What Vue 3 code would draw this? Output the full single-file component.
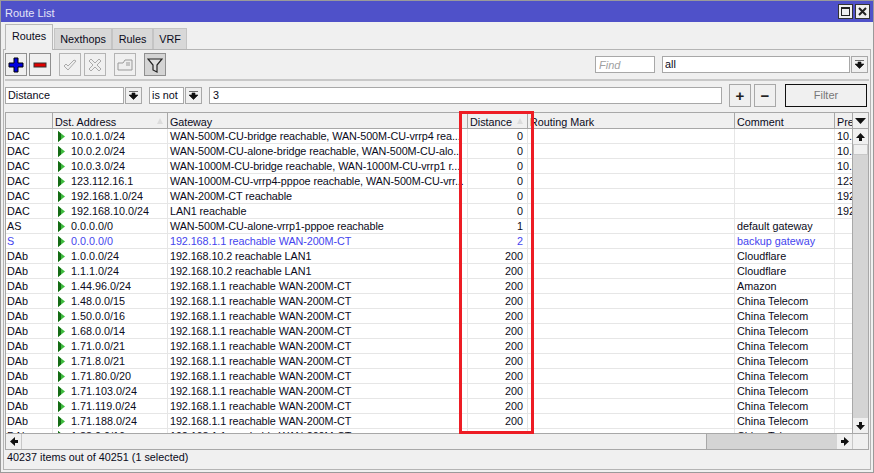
<script setup>
const gw1 = '192.168.1.1 reachable WAN-200M-CT'
const gw2 = '192.168.10.2 reachable LAN1'
const routes = [
  { flag: 'DAC', dst: '10.0.1.0/24', gw: 'WAN-500M-CU-bridge reachable, WAN-500M-CU-vrrp4 rea...', dist: 0, pref: '10.0.1.1' },
  { flag: 'DAC', dst: '10.0.2.0/24', gw: 'WAN-500M-CU-alone-bridge reachable, WAN-500M-CU-alo...', dist: 0, pref: '10.0.2.1' },
  { flag: 'DAC', dst: '10.0.3.0/24', gw: 'WAN-1000M-CU-bridge reachable, WAN-1000M-CU-vrrp1 r...', dist: 0, pref: '10.0.3.1' },
  { flag: 'DAC', dst: '123.112.16.1', gw: 'WAN-1000M-CU-vrrp4-pppoe reachable, WAN-500M-CU-vrr...', dist: 0, pref: '123.112' },
  { flag: 'DAC', dst: '192.168.1.0/24', gw: 'WAN-200M-CT reachable', dist: 0, pref: '192.168' },
  { flag: 'DAC', dst: '192.168.10.0/24', gw: 'LAN1 reachable', dist: 0, pref: '192.168' },
  { flag: 'AS', dst: '0.0.0.0/0', gw: 'WAN-500M-CU-alone-vrrp1-pppoe reachable', dist: 1, comment: 'default gateway' },
  { flag: 'S', dst: '0.0.0.0/0', gw: gw1, dist: 2, comment: 'backup gateway', blue: true },
  { flag: 'DAb', dst: '1.0.0.0/24', gw: gw2, dist: 200, comment: 'Cloudflare' },
  { flag: 'DAb', dst: '1.1.1.0/24', gw: gw2, dist: 200, comment: 'Cloudflare' },
  { flag: 'DAb', dst: '1.44.96.0/24', gw: gw1, dist: 200, comment: 'Amazon' },
  { flag: 'DAb', dst: '1.48.0.0/15', gw: gw1, dist: 200, comment: 'China Telecom' },
  { flag: 'DAb', dst: '1.50.0.0/16', gw: gw1, dist: 200, comment: 'China Telecom' },
  { flag: 'DAb', dst: '1.68.0.0/14', gw: gw1, dist: 200, comment: 'China Telecom' },
  { flag: 'DAb', dst: '1.71.0.0/21', gw: gw1, dist: 200, comment: 'China Telecom' },
  { flag: 'DAb', dst: '1.71.8.0/21', gw: gw1, dist: 200, comment: 'China Telecom' },
  { flag: 'DAb', dst: '1.71.80.0/20', gw: gw1, dist: 200, comment: 'China Telecom' },
  { flag: 'DAb', dst: '1.71.103.0/24', gw: gw1, dist: 200, comment: 'China Telecom' },
  { flag: 'DAb', dst: '1.71.119.0/24', gw: gw1, dist: 200, comment: 'China Telecom' },
  { flag: 'DAb', dst: '1.71.188.0/24', gw: gw1, dist: 200, comment: 'China Telecom' },
  { flag: 'DAb', dst: '1.88.0.0/16', gw: gw1, dist: 200, comment: 'China Telecom' }
]
</script>

<template>
  <div class="window">
    <div class="titlebar">
      <span class="title">Route List</span>
      <div class="winbtns">
        <span class="winbtn"><i class="maxbox"></i></span>
        <span class="winbtn">
          <svg width="11" height="11" viewBox="0 0 11 11"><path d="M2 2 L9 9 M9 2 L2 9" stroke="#222" stroke-width="2" /></svg>
        </span>
      </div>
    </div>

    <div class="tabs">
      <span class="tab active t-routes">Routes</span>
      <span class="tab t-next">Nexthops</span>
      <span class="tab t-rules">Rules</span>
      <span class="tab t-vrf">VRF</span>
    </div>

    <div class="panel">
      <div class="toolbar">
        <button class="tool">
          <svg width="16" height="16" viewBox="0 0 16 16"><path d="M6 1h4v5h5v4h-5v5H6v-5H1V6h5z" fill="#0000e0" stroke="#000" stroke-width="1" /></svg>
        </button>
        <button class="tool near">
          <svg width="16" height="16" viewBox="0 0 16 16"><rect x="2" y="6" width="12" height="4" fill="#e00000" stroke="#333" stroke-width="1" /></svg>
        </button>
        <button class="tool off gap">
          <svg width="16" height="16" viewBox="0 0 16 16"><path d="M2 9l4 4 8-9-2-1-6 6-2-2z" fill="#eee" stroke="#aaa" /></svg>
        </button>
        <button class="tool off near3">
          <svg width="16" height="16" viewBox="0 0 16 16"><path d="M4 2l4 4 4-4 2 2-4 4 4 4-2 2-4-4-4 4-2-2 4-4-4-4z" fill="#eee" stroke="#aaa" /></svg>
        </button>
        <button class="tool off gap">
          <svg width="16" height="16" viewBox="0 0 16 16"><path d="M1 6h5l2-3h7v10H1z" fill="#eee" stroke="#999" /><path d="M9 6h4M9 8h4" stroke="#999" /></svg>
        </button>
        <button class="tool pressed gap">
          <svg width="16" height="16" viewBox="0 0 16 16"><path d="M1 2h14L10 8v7L6 13V8z" fill="#ddd" stroke="#222" stroke-width="1.2" /></svg>
        </button>
        <input class="find" placeholder="Find" />
        <div class="all-box">all</div>
        <span class="dropbtn">
          <svg width="9" height="9" viewBox="0 0 9 9"><path d="M0 0.5h9M3 2h3v2h3L4.5 8.5 0 4h3z" stroke="#111" stroke-width="0.6" fill="#111" /></svg>
        </span>
      </div>

      <div class="filterrow">
        <div class="field f-distance">Distance</div>
        <span class="dropbtn">
          <svg width="9" height="9" viewBox="0 0 9 9"><path d="M0 0.5h9M3 2h3v2h3L4.5 8.5 0 4h3z" stroke="#111" stroke-width="0.6" fill="#111" /></svg>
        </span>
        <div class="field f-isnot">is not</div>
        <span class="dropbtn">
          <svg width="9" height="9" viewBox="0 0 9 9"><path d="M0 0.5h9M3 2h3v2h3L4.5 8.5 0 4h3z" stroke="#111" stroke-width="0.6" fill="#111" /></svg>
        </span>
        <div class="field f-value">3</div>
        <button class="mini">+</button>
        <button class="mini m2">−</button>
        <button class="filterbtn">Filter</button>
      </div>

      <div class="tablewrap">
        <div class="body-area">
          <div class="grid">
            <div class="row head">
              <div class="c c-flag"></div>
              <div class="c c-dst">Dst. Address<i class="sort"></i></div>
              <div class="c c-gw">Gateway</div>
              <div class="c c-dist">Distance<i class="sort"></i></div>
              <div class="c c-mark">Routing Mark</div>
              <div class="c c-comment">Comment</div>
              <div class="c c-pref">Pref</div>
            </div>
            <div class="rows">
              <div class="row" v-for="r in routes" :key="r.dst + r.flag" :class="{ blue: r.blue }">
                <div class="c c-flag">{{ r.flag }}</div>
                <div class="c c-dst">
                  <svg class="arrow" width="7" height="11" viewBox="0 0 7 11"><path d="M0 0L7 5.5L0 11z" fill="#3dbb3d" /><path d="M0 0L3 2.4V8.6L0 11z" fill="#146a14" /></svg>{{ r.dst }}
                </div>
                <div class="c c-gw">{{ r.gw }}</div>
                <div class="c c-dist num">{{ r.dist }}</div>
                <div class="c c-mark"></div>
                <div class="c c-comment">{{ r.comment }}</div>
                <div class="c c-pref">{{ r.pref }}</div>
              </div>
            </div>
          </div>
          <div class="vscroll">
            <span class="sbtn head-btn">
              <svg width="11" height="6" viewBox="0 0 11 6"><path d="M0 0h11L5.5 6z" fill="#111" /></svg>
            </span>
            <span class="sbtn">
              <svg width="9" height="8" viewBox="0 0 9 8"><path d="M4.5 0L9 5H6v3H3V5H0z" fill="#111" /></svg>
            </span>
            <span class="thumb-v"></span>
            <span class="track-v"></span>
            <span class="sbtn">
              <svg width="9" height="8" viewBox="0 0 9 8"><path d="M3 0h3v3h3L4.5 8 0 3h3z" fill="#111" /></svg>
            </span>
          </div>
        </div>
        <div class="hscroll">
          <span class="sbtn sleft">
            <svg width="8" height="9" viewBox="0 0 8 9"><path d="M0 4.5L5 0v3h3v3H5v3z" fill="#111" /></svg>
          </span>
          <span class="thumb-h"></span>
          <span class="track-h"></span>
          <span class="sbtn">
            <svg width="8" height="9" viewBox="0 0 8 9"><path d="M8 4.5L3 0v3H0v3h3v3z" fill="#111" /></svg>
          </span>
          <span class="corner"></span>
        </div>
        <div class="redbox"></div>
      </div>

      <div class="status">40237 items out of 40251 (1 selected)</div>
    </div>
  </div>
</template>

<style scoped>
.window {
  width: 874px;
  height: 473px;
  box-sizing: border-box;
  background: #f0f0f0;
  border: 1px solid #9a9a9a;
  display: flex;
  flex-direction: column;
  font-family: "Liberation Sans", Arial, sans-serif;
  font-size: 10.8px;
  color: #0a0a20;
  overflow: hidden;
}
.titlebar {
  height: 21px;
  background: #4f51c9;
  display: flex;
  align-items: center;
  justify-content: space-between;
  padding: 0 3px 0 4px;
  flex: none;
}
.title {
  color: #e4e4f8;
  font-size: 11px;
  position: relative;
  top: 1px;
}
.winbtns {
  display: flex;
  gap: 2px;
}
.winbtn {
  width: 15px;
  height: 15px;
  box-sizing: border-box;
  background: #efefef;
  border: 1px solid #333;
  display: flex;
  align-items: center;
  justify-content: center;
}
.maxbox {
  width: 9px;
  height: 9px;
  border: 1px solid #222;
  border-top-width: 2px;
  box-sizing: border-box;
  display: block;
}
.tabs {
  display: flex;
  height: 28px;
  box-sizing: border-box;
  padding-left: 4px;
  flex: none;
  align-items: flex-end;
  position: relative;
  z-index: 1;
  margin-bottom: -1px;
}
.tab {
  height: 21px;
  line-height: 21px;
  text-align: center;
  background: #d8d8d8;
  border: 1px solid #c4c4c4;
  border-bottom: 0;
  box-sizing: border-box;
  margin-bottom: 1px;
}
.tab.active {
  height: 26px;
  line-height: 23px;
  background: #f0f0f0;
  border-color: #b8b8b8;
  margin-bottom: 0;
  margin-right: 1px;
}
.t-routes { width: 48px; }
.t-next { width: 58px; }
.t-rules { width: 41px; }
.t-vrf { width: 34px; }
.panel {
  flex: 1;
  margin: 0 2px 2px 2px;
  padding: 0 1px;
  border: 1px solid #b4b4b4;
  display: flex;
  flex-direction: column;
  min-height: 0;
}
.toolbar {
  height: 31px;
  display: flex;
  align-items: center;
  border-bottom: 2px solid #c8c8c8;
  box-sizing: border-box;
  flex: none;
}
.tool {
  width: 22px;
  height: 23px;
  padding: 0;
  background: #f0f0f0;
  border: 1px solid #8f8f8f;
  display: flex;
  align-items: center;
  justify-content: center;
}
.tool.off {
  border-color: #b4b4b4;
}
.tool.near {
  margin-left: 2px;
}
.tool.near3 {
  margin-left: 3px;
}
.tool.gap {
  margin-left: 8px;
}
.tool.pressed {
  background: #d4d4d4;
}
.find {
  width: 60px;
  height: 17px;
  box-sizing: border-box;
  margin-left: auto;
  padding: 0 3px;
  border: 1px solid #a8a8a8;
  background: #fff;
  font: italic 11px "Liberation Sans", Arial, sans-serif;
  outline: none;
}
.find::placeholder {
  color: #a0a0a0;
}
.all-box {
  width: 188px;
  height: 17px;
  box-sizing: border-box;
  line-height: 15px;
  padding-left: 2px;
  border: 1px solid #a8a8a8;
  background: #fff;
  margin-left: 7px;
  margin-right: 1px;
}
.toolbar .dropbtn {
  margin-right: 1px;
}
.dropbtn {
  width: 17px;
  height: 17px;
  border: 1px solid #a8a8a8;
  background: #f0f0f0;
  display: inline-flex;
  align-items: center;
  justify-content: center;
  box-sizing: border-box;
  flex: none;
}
.filterrow {
  height: 31px;
  box-sizing: border-box;
  padding-bottom: 3px;
  display: flex;
  align-items: center;
  flex: none;
}
.field {
  height: 17px;
  line-height: 15px;
  padding-left: 2px;
  border: 1px solid #a8a8a8;
  background: #fff;
  box-sizing: border-box;
}
.f-distance {
  width: 119px;
  margin-right: 1px;
}
.f-isnot {
  width: 35px;
  margin-left: 7px;
  margin-right: 1px;
}
.f-value {
  width: 513px;
  margin-left: 7px;
  padding-left: 3px;
}
.mini {
  width: 22px;
  height: 23px;
  padding: 0;
  margin-left: 7px;
  border: 1px solid #a8a8a8;
  background: #f0f0f0;
  color: #222;
  font: bold 15px "Liberation Sans", Arial, sans-serif;
}
.mini.m2 {
  margin-left: 3px;
}
.filterbtn {
  width: 82px;
  height: 23px;
  margin-left: 9px;
  padding: 0;
  border: 1px solid #111;
  background: #f0f0f0;
  color: #777;
  font: 11px "Liberation Sans", Arial, sans-serif;
}
.tablewrap {
  position: relative;
  width: 864px;
  height: 338px;
  flex: none;
  border: 1px solid #a8a8a8;
  box-sizing: border-box;
}
.body-area {
  display: flex;
  height: 320px;
}
.grid {
  flex: 1;
  min-width: 0;
  overflow: hidden;
  background: #fff;
}
.rows {
  height: 304px;
  overflow: hidden;
}
.row {
  display: flex;
  height: 15px;
  line-height: 14px;
  box-sizing: border-box;
  border-bottom: 1px solid #e6e6e6;
  white-space: nowrap;
}
.row.blue {
  color: #4444ee;
}
.row.head {
  height: 16px;
  line-height: 18px;
  background: #f0f0f0;
  border-bottom: 1px solid #a8a8a8;
}
.c {
  box-sizing: border-box;
  padding-left: 2px;
  border-right: 1px solid #e6e6e6;
  overflow: hidden;
  position: relative;
  flex: none;
}
.head .c {
  border-right-color: #a8a8a8;
}
.c-flag { width: 47px; padding-left: 1px; }
.c-dst { width: 115px; }
.c-gw { width: 300px; letter-spacing: -0.08px; }
.c-dist { width: 60px; }
.c-mark { width: 207px; }
.c-comment { width: 100px; }
.c-pref { width: 18px; border-right: 0; }
.num {
  text-align: right;
  padding-right: 4px;
}
.arrow {
  margin: 0 6px 0 3px;
  vertical-align: -2px;
}
.sort {
  position: absolute;
  right: 4px;
  top: 5px;
  width: 0;
  height: 0;
  border-left: 3px solid transparent;
  border-right: 3px solid transparent;
  border-bottom: 6px solid #dcdcdc;
}
.vscroll {
  width: 16px;
  flex: none;
  display: flex;
  flex-direction: column;
  border-left: 1px solid #a8a8a8;
  box-sizing: border-box;
  background: #d4d4d4;
}
.sbtn {
  width: 15px;
  height: 15px;
  background: #f0f0f0;
  display: flex;
  align-items: center;
  justify-content: center;
  flex: none;
}
.head-btn {
  height: 16px;
  border-bottom: 1px solid #a8a8a8;
  box-sizing: border-box;
}
.thumb-v {
  height: 11px;
  background: #f0f0f0;
  border: 1px solid #c8c8c8;
  box-sizing: border-box;
  flex: none;
}
.track-v {
  flex: 1;
}
.hscroll {
  height: 16px;
  box-sizing: border-box;
  display: flex;
  border-top: 1px solid #a8a8a8;
  background: #d4d4d4;
}
.sleft {
  border-right: 1px solid #c8c8c8;
  box-sizing: content-box;
}
.thumb-h {
  width: 685px;
  background: #f0f0f0;
  border-right: 1px solid #a8a8a8;
  box-sizing: border-box;
  flex: none;
}
.track-h {
  flex: 1;
}
.corner {
  width: 16px;
  background: #f0f0f0;
  border-left: 1px solid #c8c8c8;
  box-sizing: border-box;
  flex: none;
}
.redbox {
  position: absolute;
  left: 453px;
  top: -2px;
  width: 75px;
  height: 323px;
  border: 3px solid #ed1c24;
  box-sizing: border-box;
  pointer-events: none;
}
.status {
  height: 19px;
  line-height: 15px;
  padding-left: 2px;
  flex: none;
}
</style>

<style>
html, body {
  margin: 0;
  overflow: hidden;
}
</style>
